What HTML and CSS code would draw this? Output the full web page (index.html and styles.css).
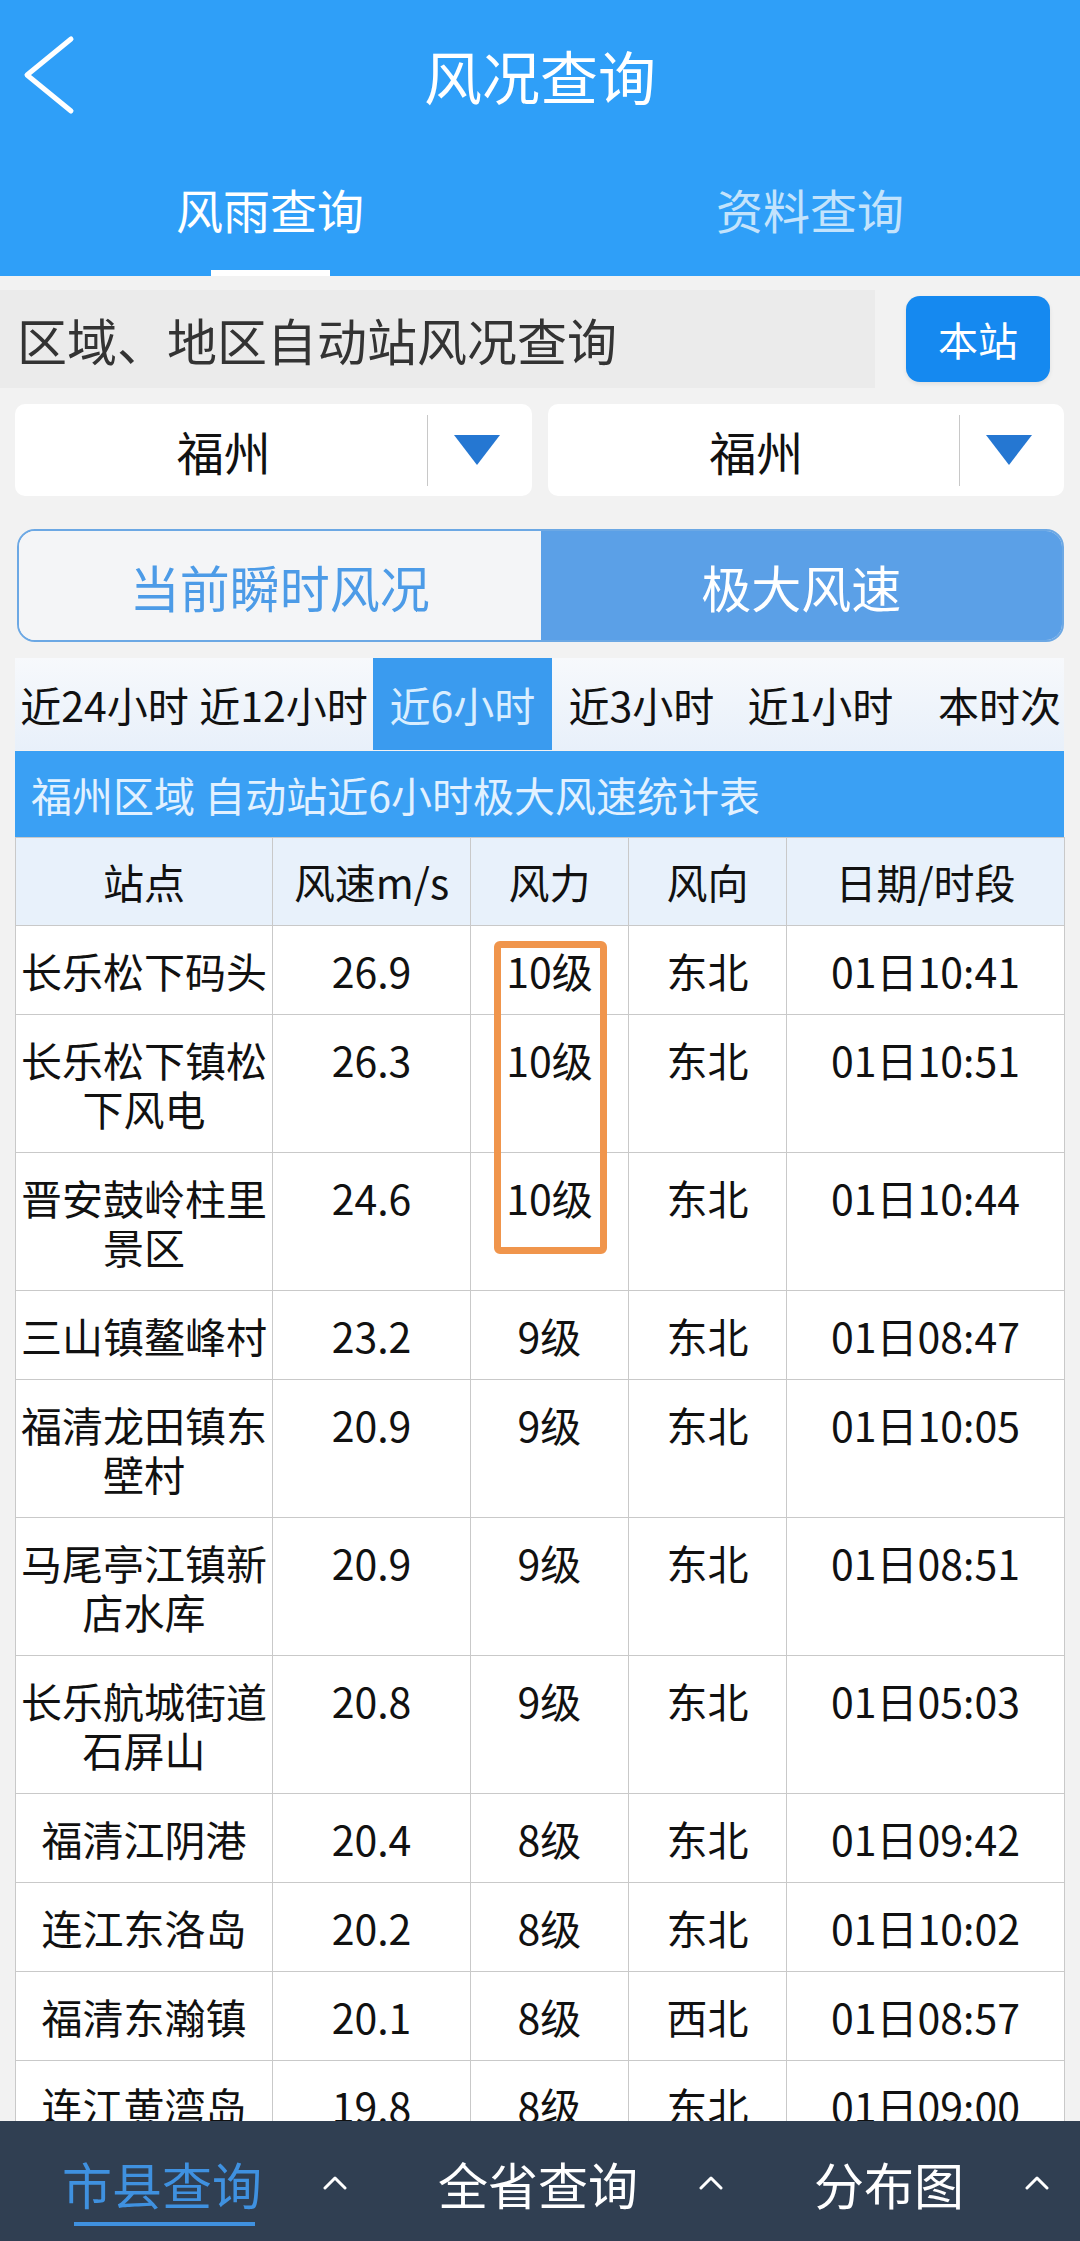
FILE: index.html
```html
<!DOCTYPE html>
<html lang="zh-CN">
<head>
<meta charset="utf-8">
<title>风况查询</title>
<link rel="stylesheet" href="styles.css">
</head>
<body>
<header class="appbar">
  <div class="topbar">
    <svg class="back" viewBox="0 0 60 86"><polyline points="51,7 7,43 51,79" /></svg>
    <h1 class="title">风况查询</h1>
    <span></span>
  </div>
  <nav class="tabs">
    <div class="tab active"><span>风雨查询</span><i class="tab-line"></i></div>
    <div class="tab"><span>资料查询</span></div>
  </nav>
</header>

<div class="search-row">
  <div class="search-box">区域、地区自动站风况查询</div>
  <div class="btn-station">本站</div>
</div>

<div class="selects">
  <div class="select">
    <div class="select-text">福州</div>
    <div class="select-div"></div>
    <div class="select-arrow"><svg viewBox="0 0 46 30"><polygon points="0,0 46,0 23,30" /></svg></div>
  </div>
  <div class="select">
    <div class="select-text">福州</div>
    <div class="select-div"></div>
    <div class="select-arrow"><svg viewBox="0 0 46 30"><polygon points="0,0 46,0 23,30" /></svg></div>
  </div>
</div>

<div class="segment">
  <div class="seg seg-off">当前瞬时风况</div>
  <div class="seg seg-on">极大风速</div>
</div>

<div class="periods">
  <div class="period">近24小时</div>
  <div class="period">近12小时</div>
  <div class="period active">近6小时</div>
  <div class="period">近3小时</div>
  <div class="period">近1小时</div>
  <div class="period">本时次</div>
</div>

<div class="table-wrap">
  <div class="table-title">福州区域 自动站近6小时极大风速统计表</div>
  <table class="data">
    <colgroup>
      <col class="c-site"><col class="c-speed"><col class="c-force"><col class="c-dir"><col class="c-time">
    </colgroup>
    <thead>
      <tr><th>站点</th><th>风速m/s</th><th>风力</th><th>风向</th><th>日期/时段</th></tr>
    </thead>
    <tbody>
      <tr><td>长乐松下码头</td><td>26.9</td><td>10级</td><td>东北</td><td>01日10:41</td></tr>
      <tr><td>长乐松下镇松下风电</td><td>26.3</td><td>10级</td><td>东北</td><td>01日10:51</td></tr>
      <tr><td>晋安鼓岭柱里景区</td><td>24.6</td><td>10级</td><td>东北</td><td>01日10:44</td></tr>
      <tr><td>三山镇鳌峰村</td><td>23.2</td><td>9级</td><td>东北</td><td>01日08:47</td></tr>
      <tr><td>福清龙田镇东壁村</td><td>20.9</td><td>9级</td><td>东北</td><td>01日10:05</td></tr>
      <tr><td>马尾亭江镇新店水库</td><td>20.9</td><td>9级</td><td>东北</td><td>01日08:51</td></tr>
      <tr><td>长乐航城街道石屏山</td><td>20.8</td><td>9级</td><td>东北</td><td>01日05:03</td></tr>
      <tr><td>福清江阴港</td><td>20.4</td><td>8级</td><td>东北</td><td>01日09:42</td></tr>
      <tr><td>连江东洛岛</td><td>20.2</td><td>8级</td><td>东北</td><td>01日10:02</td></tr>
      <tr><td>福清东瀚镇</td><td>20.1</td><td>8级</td><td>西北</td><td>01日08:57</td></tr>
      <tr><td>连江黄湾岛</td><td>19.8</td><td>8级</td><td>东北</td><td>01日09:00</td></tr>
    </tbody>
  </table>
  <div class="mark"></div>
</div>

<nav class="bottom-nav">
  <div class="nav-item active"><span>市县查询</span><i class="nav-bar"></i></div>
  <svg class="caret" viewBox="0 0 24 14"><polyline points="2,12 12,2 22,12" /></svg>
  <div class="nav-item"><span>全省查询</span></div>
  <svg class="caret" viewBox="0 0 24 14"><polyline points="2,12 12,2 22,12" /></svg>
  <div class="nav-item"><span>分布图</span></div>
  <svg class="caret" viewBox="0 0 24 14"><polyline points="2,12 12,2 22,12" /></svg>
</nav>
</body>
</html>
```

FILE: styles.css
```css
* { box-sizing: border-box; margin: 0; padding: 0; }

body {
  margin: 0;
  background: #f2f2f2;
  font-family: "Noto Sans CJK SC", "Noto Sans", sans-serif;
  color: #111;
}

/* header */
.appbar { background: #2f9ff8; height: 276px; }
.topbar {
  height: 150px;
  display: grid;
  grid-template-columns: 1fr auto 1fr;
  align-items: center;
}
.back { width: 60px; height: 86px; margin-left: 20px; }
.back polyline { fill: none; stroke: #fff; stroke-width: 5; stroke-linecap: round; stroke-linejoin: round; }
.title { font-size: 58px; font-weight: 400; color: #fff; line-height: 1; }

.tabs { display: flex; height: 126px; }
.tab {
  flex: 1;
  display: flex;
  flex-direction: column;
  align-items: center;
  padding-top: 29px;
}
.tab span { font-size: 47px; line-height: 60px; color: #c3e3fc; }
.tab.active span { color: #fff; }
.tab-line { display: block; width: 119px; height: 6px; background: #fff; margin-top: 31px; }

/* search */
.search-row { display: flex; align-items: center; gap: 31px; padding-top: 14px; }
.search-box {
  width: 875px;
  height: 98px;
  background: #ebebeb;
  display: flex;
  align-items: center;
  padding-left: 17px;
  font-size: 50px;
  color: #333;
}
.btn-station {
  width: 144px;
  height: 86px;
  background: #1589f0;
  border-radius: 14px;
  color: #fff;
  font-size: 40px;
  display: flex;
  align-items: center;
  justify-content: center;
  box-shadow: 0 2px 4px rgba(0,0,0,0.08);
}

/* selects */
.selects { display: flex; gap: 16px; padding: 16px 16px 0 15px; }
.select {
  flex: 1;
  height: 92px;
  background: #fff;
  border-radius: 10px;
  display: flex;
  align-items: center;
}
.select-text { flex: 1; text-align: center; font-size: 47px; color: #111; padding-left: 6px; }
.select-div { width: 1px; height: 71px; background: #c8c8c8; }
.select-arrow { width: 104px; padding-left: 26px; display: flex; }
.select-arrow svg { width: 46px; height: 30px; }
.select-arrow polygon { fill: #2577d2; }

/* segment */
.segment {
  display: flex;
  margin: 33px 16px 0 17px;
  height: 113px;
  border: 2px solid #6ca8e4;
  border-radius: 18px;
  overflow: hidden;
}
.seg { flex: 1; display: flex; align-items: center; justify-content: center; font-size: 50px; }
.seg-off { background: #f4f5f7; color: #4c9be7; }
.seg-on { background: #5ba0e7; color: #fff; }

/* periods */
.periods {
  display: flex;
  margin: 16px 16px 0 15px;
  height: 92px;
  background: linear-gradient(#f7f9fc, #e8f0fa);
  overflow: hidden;
}
.period {
  flex: 0 0 179px;
  display: flex;
  align-items: center;
  justify-content: center;
  font-size: 41px;
  color: #111;
  white-space: nowrap;
}
.period.active { background: #3a9bef; color: #d9eeff; }

/* table */
.table-wrap { position: relative; margin: 1px 16px 0 15px; }
.table-title {
  height: 86px;
  background: #3aa0f4;
  color: #e2f1ff;
  font-size: 41px;
  display: flex;
  align-items: center;
  padding-left: 16px;
}
.data {
  width: 100%;
  border-collapse: collapse;
  table-layout: fixed;
  font-size: 41px;
  color: #111;
}
.c-site { width: 257px; }
.c-speed { width: 198px; }
.c-force { width: 158px; }
.c-dir { width: 158px; }
.c-time { width: 278px; }
.data th, .data td { border: 1px solid #c9c9c9; text-align: center; }
.data th {
  height: 88px;
  background: #e8f1fb;
  font-weight: 400;
  vertical-align: middle;
  line-height: 49px;
}
.data td {
  background: #fff;
  vertical-align: top;
  padding: 20px 3px 19px;
  line-height: 49px;
}

.mark {
  position: absolute;
  left: 479px;
  top: 190px;
  width: 113px;
  height: 313px;
  border: 7px solid #f0954c;
  border-radius: 6px;
}

/* bottom nav */
.bottom-nav {
  position: fixed;
  left: 0;
  right: 0;
  bottom: 0;
  height: 120px;
  background: #303f52;
  display: flex;
  align-items: flex-start;
  padding: 32px 0 0 62px;
}
.nav-item {
  flex: none;
  display: flex;
  flex-direction: column;
  font-size: 50px;
  line-height: 60px;
  color: #fff;
  white-space: nowrap;
}
.nav-item.active { color: #3f91e0; }
.nav-bar { display: block; height: 4px; background: #3f91e0; margin: 9px 7px 0 12px; }
.caret { flex: none; width: 24px; height: 14px; margin: 23px 91px 0 61px; }
.caret polyline { fill: none; stroke: #fff; stroke-width: 3; stroke-linecap: round; stroke-linejoin: round; }
```
